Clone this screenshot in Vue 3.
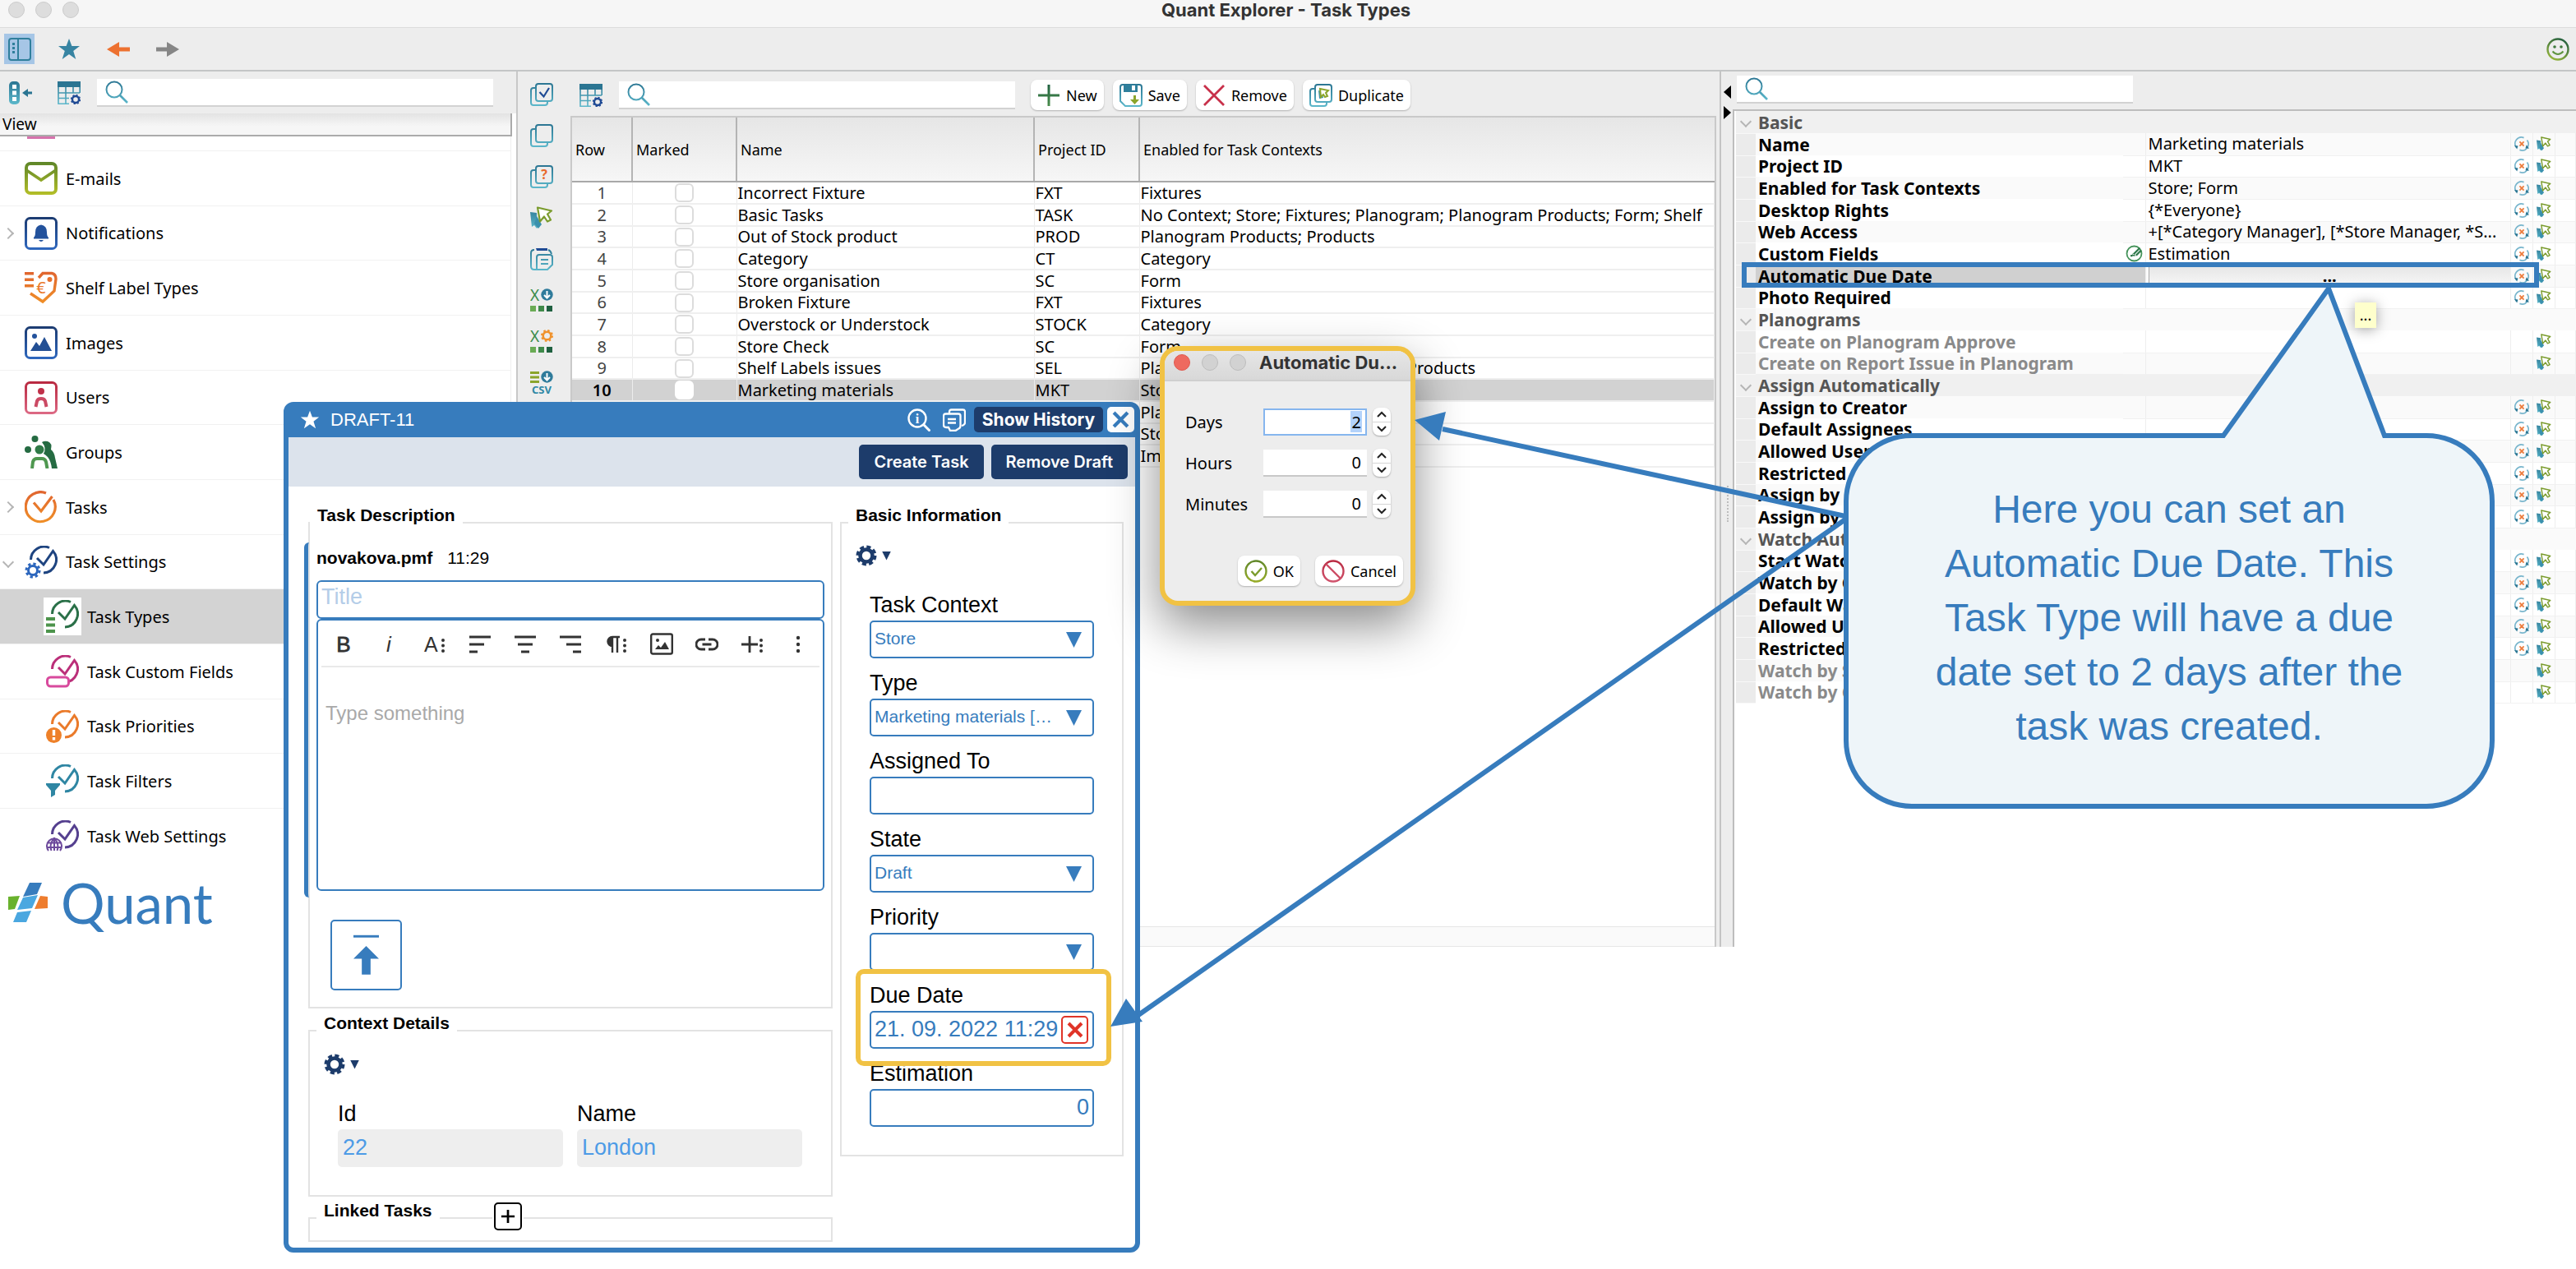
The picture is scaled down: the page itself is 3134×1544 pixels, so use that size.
<script setup>
import { ref } from 'vue'

//--------- Tree -------------
const views = [
  { name: 'E-mails', icon: 'mail' },
  { name: 'Notifications', icon: 'bell', arrow: 'right' },
  { name: 'Shelf Label Types', icon: 'label' },
  { name: 'Images', icon: 'image' },
  { name: 'Users', icon: 'user' },
  { name: 'Groups', icon: 'group' },
  { name: 'Tasks', icon: 'tasks', arrow: 'right' },
  { name: 'Task Settings', icon: 'tsettings', arrow: 'down' },
  { name: 'Task Types', icon: 'ttypes', child: true, active: true },
  { name: 'Task Custom Fields', icon: 'tfields', child: true },
  { name: 'Task Priorities', icon: 'tprio', child: true },
  { name: 'Task Filters', icon: 'tfilter', child: true },
  { name: 'Task Web Settings', icon: 'tweb', child: true }
]

const tools = ['markall', 'unmark', 'askmark', 'cursor', 'paste', 'xlsdown', 'xlsgear', 'csv']

const actions = [
  { name: 'New', icon: 'plus' },
  { name: 'Save', icon: 'save' },
  { name: 'Remove', icon: 'cross' },
  { name: 'Duplicate', icon: 'dup' }
]

//--------- Task types table -------------
const rows = [
  { name: 'Incorrect Fixture', id: 'FXT', ctx: 'Fixtures' },
  { name: 'Basic Tasks', id: 'TASK', ctx: 'No Context; Store; Fixtures; Planogram; Planogram Products; Form; Shelf' },
  { name: 'Out of Stock product', id: 'PROD', ctx: 'Planogram Products; Products' },
  { name: 'Category', id: 'CT', ctx: 'Category' },
  { name: 'Store organisation', id: 'SC', ctx: 'Form' },
  { name: 'Broken Fixture', id: 'FXT', ctx: 'Fixtures' },
  { name: 'Overstock or Understock', id: 'STOCK', ctx: 'Category' },
  { name: 'Store Check', id: 'SC', ctx: 'Form' },
  { name: 'Shelf Labels issues', id: 'SEL', ctx: 'Planogram Products; Shelf Labels; Products' },
  { name: 'Marketing materials', id: 'MKT', ctx: 'Store; Form' },
  { name: '', id: '', ctx: 'Planogram' },
  { name: '', id: '', ctx: 'Store' },
  { name: '', id: '', ctx: 'Images' }
]
const selectedRow = ref(9)

//--------- Properties -------------
const props = [
  { group: 'Basic' },
  { name: 'Name', value: 'Marketing materials' },
  { name: 'Project ID', value: 'MKT' },
  { name: 'Enabled for Task Contexts', value: 'Store; Form' },
  { name: 'Desktop Rights', value: '{*Everyone}' },
  { name: 'Web Access', value: '+[*Category Manager], [*Store Manager, *S...' },
  { name: 'Custom Fields', value: 'Estimation', edited: true },
  { name: 'Automatic Due Date', selected: true },
  { name: 'Photo Required', check: true },
  { group: 'Planograms' },
  { name: 'Create on Planogram Approve', off: true },
  { name: 'Create on Report Issue in Planogram', off: true },
  { group: 'Assign Automatically' },
  { name: 'Assign to Creator' },
  { name: 'Default Assignees' },
  { name: 'Allowed Users' },
  { name: 'Restricted' },
  { name: 'Assign by' },
  { name: 'Assign by' },
  { group: 'Watch Aut' },
  { name: 'Start Watc' },
  { name: 'Watch by C' },
  { name: 'Default Wa' },
  { name: 'Allowed U' },
  { name: 'Restricted' },
  { name: 'Watch by S', off: true },
  { name: 'Watch by C', off: true }
]

//--------- Due date dialog -------------
const due = ref([
  { name: 'Days', value: 2 },
  { name: 'Hours', value: 0 },
  { name: 'Minutes', value: 0 }
])
const step = (item, by) => {
  item.value = Math.max(0, Number(item.value) + by)
}

//--------- Draft window -------------
const fields = [
  { name: 'Task Context', type: 'select', value: 'Store' },
  { name: 'Type', type: 'select', value: 'Marketing materials […' },
  { name: 'Assigned To', type: 'text', value: '' },
  { name: 'State', type: 'select', value: 'Draft' },
  { name: 'Priority', type: 'select', value: '' },
  { name: 'Due Date', type: 'date', value: '21. 09. 2022 11:29' },
  { name: 'Estimation', type: 'number', value: '0' }
]
const editor = ['bold', 'italic', 'font', 'left', 'center', 'right', 'para', 'picture', 'link', 'more', 'dots']
</script>

<template>
  <svg class="sprite" aria-hidden="true">
    <defs>
      <linearGradient id="g-teal" gradientUnits="userSpaceOnUse" x1="0" y1="0" x2="0" y2="28"><stop offset="0" stop-color="#2b7592" /><stop offset="1" stop-color="#5cb8cb" /></linearGradient>
      <linearGradient id="g-lime" gradientUnits="userSpaceOnUse" x1="0" y1="0" x2="0" y2="40"><stop offset="0" stop-color="#5d8529" /><stop offset="1" stop-color="#b4bf28" /></linearGradient>
      <linearGradient id="g-navy" gradientUnits="userSpaceOnUse" x1="0" y1="0" x2="0" y2="40"><stop offset="0" stop-color="#1c3b70" /><stop offset="1" stop-color="#2f68bf" /></linearGradient>
      <linearGradient id="g-orange" gradientUnits="userSpaceOnUse" x1="0" y1="0" x2="0" y2="40"><stop offset="0" stop-color="#e0642f" /><stop offset="1" stop-color="#f09027" /></linearGradient>
      <linearGradient id="g-red" gradientUnits="userSpaceOnUse" x1="0" y1="0" x2="0" y2="40"><stop offset="0" stop-color="#b8283f" /><stop offset="1" stop-color="#dd6a85" /></linearGradient>
      <linearGradient id="g-green" gradientUnits="userSpaceOnUse" x1="0" y1="0" x2="0" y2="40"><stop offset="0" stop-color="#1f6040" /><stop offset="1" stop-color="#5fa352" /></linearGradient>
      <linearGradient id="g-smile" gradientUnits="userSpaceOnUse" x1="20" y1="0" x2="6" y2="28"><stop offset="0" stop-color="#1f5c3f" /><stop offset="1" stop-color="#9dbb3c" /></linearGradient>
    </defs>
  </svg>
  <svg class="symbols" aria-hidden="true">
    <!-- 28px toolbar icons -->
    <symbol id="i-panel" viewBox="0 0 28 28"><g fill="none" stroke="#2f7f9c" stroke-width="2"><rect x="1" y="1" width="26" height="26" rx="3" /><path d="M12 1v26" /></g><path fill="#2f7f9c" d="M5 6h3v3H5zM5 11h3v3H5zM5 16h3v3H5z" /></symbol>
    <symbol id="i-star" viewBox="0 0 28 28"><path fill="currentColor" d="M14 1l3.400 9H27l-7.800 5.900L22.300 26 14 20l-8.300 6 3.100-10.100L1 10h9.600z" /></symbol>
    <symbol id="i-back" viewBox="0 0 28 28"><path fill="currentColor" d="M0 14l15-9v6.500h13v5H15V23z" /></symbol>
    <symbol id="i-collapse" viewBox="0 0 28 28"><rect x="0" y="0" width="13" height="28" rx="5" fill="url(#g-teal)" /><path fill="#fff" d="M4 4h5v5H4zM4 11.500h5v5H4zM4 19h5v5H4z" /><path fill="#2b7592" d="M16 14l7-5v3.500h5v3h-5V19z" /></symbol>
    <symbol id="i-grid" viewBox="0 0 28 28"><path fill="#2b7592" d="M0 0h28v7H0z" /><path fill="none" stroke="url(#g-teal)" stroke-width="1.600" d="M1 7v20.200h13M10 7v20M19 7v7M27.200 7v7M1 14h26M1 20.500h13" /><circle cx="22" cy="22" r="4" fill="none" stroke="#1f4a94" stroke-width="2.400" /><circle cx="22" cy="22" r="5.500" fill="none" stroke="#1f4a94" stroke-width="1.400" stroke-dasharray="2.200 2.100" /></symbol>
    <symbol id="i-search" viewBox="0 0 28 28"><g fill="none" stroke="url(#g-teal)"><circle cx="11" cy="11" r="9.500" stroke-width="2" /><path stroke-width="2.600" d="M18 18l9 9" /></g></symbol>
    <symbol id="i-smile" viewBox="0 0 28 28"><circle cx="14" cy="14" r="12.500" fill="none" stroke="url(#g-smile)" stroke-width="2.400" /><circle cx="10" cy="11" r="1.800" fill="#3e7a3d" /><circle cx="18" cy="11" r="1.800" fill="#3e7a3d" /><path d="M7.500 16.500q6.500 7 13 0" fill="none" stroke="#5f9440" stroke-width="2" /></symbol>
    <symbol id="i-unmark" viewBox="0 0 28 28"><g fill="none" stroke="url(#g-teal)" stroke-width="2"><rect x="7" y="1" width="20" height="21" rx="3" /><path d="M7 6H4q-3 0-3 3v15q0 3 3 3h14q3 0 3-3v-2" /></g></symbol>
    <symbol id="i-markall" viewBox="0 0 28 28"><use href="#i-unmark" /><path d="M11.500 11l5 5.500L23 6" fill="none" stroke="#1f4a94" stroke-width="2.200" /></symbol>
    <symbol id="i-askmark" viewBox="0 0 28 28"><use href="#i-unmark" /><text x="17" y="17" text-anchor="middle" font-size="16" font-weight="700" fill="#e8692c">?</text></symbol>
    <symbol id="i-cursor" viewBox="0 0 28 28"><path fill="url(#g-teal)" d="M0 7l8 1v12l4 2-4 5-3-4-3 2z" /><path fill="#3a90ad" d="M8 12l6 10-4 5-5-6z" /><path fill="#fff" stroke="#7b9c2e" stroke-width="2.200" stroke-linejoin="round" d="M9 1.500l17 4-5 4 4 7-4 2-4-6-5 6z" /></symbol>
    <symbol id="i-paste" viewBox="0 0 28 28"><g fill="none" stroke="url(#g-teal)" stroke-width="2"><path d="M8 27H5q-4 0-4-4V7q0-4 4-4M22 3q3 1 4 5" /><path d="M8 27V12q0-3 3-3h13q3 0 3 3v9l-6 6z" /><path d="M13 15h9M13 20h9" /></g><path fill="#1f4a94" d="M7 1h14v3H8z" /></symbol>
    <symbol id="i-xls" viewBox="0 0 28 28"><text x="0" y="15" font-size="19" fill="#3b8c4a">X</text><path fill="#6aab55" d="M0 21h7v7H0z" /><path fill="#3f8a4a" d="M10 21h7v7h-7z" /><path fill="#1f6040" d="M20 21h7v7h-7z" /></symbol>
    <symbol id="i-down" viewBox="0 0 28 28"><circle cx="20.500" cy="7.500" r="7.200" fill="#2f7b9b" /><path d="M20.500 3v8M17 8l3.500 3.500L24 8" fill="none" stroke="#fff" stroke-width="2" /></symbol>
    <symbol id="i-xlsdown" viewBox="0 0 28 28"><use href="#i-xls" /><use href="#i-down" /></symbol>
    <symbol id="i-xlsgear" viewBox="0 0 28 28"><use href="#i-xls" /><circle cx="20.500" cy="7.500" r="4.800" fill="none" stroke="#f0922c" stroke-width="2.600" /><circle cx="20.500" cy="7.500" r="6.500" fill="none" stroke="#f0922c" stroke-width="2" stroke-dasharray="2.500 2.600" /></symbol>
    <symbol id="i-csv" viewBox="0 0 28 28"><path fill="#8ba52b" d="M0 1h11v3H0zM0 6.500h11v3H0zM0 12h11v3H0z" /><use href="#i-down" /><text x="14" y="28" text-anchor="middle" font-size="13" font-weight="700" fill="#3088a5">CSV</text></symbol>
    <symbol id="i-plus" viewBox="0 0 28 28"><path d="M14 1v26M1 14h26" stroke="url(#g-green)" stroke-width="3" /></symbol>
    <symbol id="i-save" viewBox="0 0 28 28"><path fill="#fff" stroke="url(#g-teal)" stroke-width="2" d="M4 1h20q3 0 3 3v20q0 3-3 3H7l-6-6V4q0-3 3-3z" /><path fill="#2f7f9c" d="M5 1h17v9H5z" /><path fill="#fff" d="M15 2h4v6h-4z" /><path fill="#8ba52b" d="M17 14h3v5h4l-5.500 6L13 19h4z" /></symbol>
    <symbol id="i-cross" viewBox="0 0 28 28"><path d="M2 2l24 24M26 2L2 26" stroke="#c8304a" stroke-width="2.800" /></symbol>
    <symbol id="i-dup" viewBox="0 0 28 28"><use href="#i-unmark" /><path fill="#3a90ad" d="M11 8l4 1 2 8-5 1z" /><path fill="#fff" stroke="#8ba52b" stroke-width="2" d="M13 6l10 2-3 3 2 4-3 1-2-3-3 3z" /></symbol>
    <symbol id="i-revert" viewBox="0 0 28 28"><path d="M18 2.500A12 12 0 0 0 4 21M10 25.500A12 12 0 0 0 24 7" fill="none" stroke="#79b6cd" stroke-width="2.600" /><path fill="#2b7592" d="M0 17l7 1-2 6zM28 23l-7-1 2-6z" /><path d="M10 10l8 8M18 10l-8 8" stroke="#ec7b3c" stroke-width="2.800" /></symbol>
    <symbol id="i-edited" viewBox="0 0 28 28"><circle cx="14" cy="14" r="12" fill="none" stroke="#45935a" stroke-width="2.400" /><path fill="none" stroke="#2f7a4b" stroke-width="3" d="M13 15L23 5M17 17l8-8" /><path fill="#2f7a4b" d="M11 13v5h5l-1-2-3 0zM8 16h3v3H8z" /></symbol>
    <symbol id="i-ok" viewBox="0 0 28 28"><circle cx="14" cy="14" r="12.500" fill="none" stroke="url(#g-lime)" stroke-width="2.400" /><path d="M8.500 14l4.500 5 8-9" fill="none" stroke="#7b9c2e" stroke-width="2.400" /></symbol>
    <symbol id="i-cancel" viewBox="0 0 28 28"><circle cx="14" cy="14" r="12.500" fill="none" stroke="url(#g-red)" stroke-width="2.400" /><path d="M5 5l18 18" stroke="#cc4a62" stroke-width="2.400" /></symbol>
    <!-- 40px tree icons -->
    <symbol id="i-mail" viewBox="0 0 40 40"><rect x="2" y="2" width="36" height="36" rx="5" fill="none" stroke="url(#g-lime)" stroke-width="4" /><path d="M2 10l18 12L38 10" fill="none" stroke="url(#g-lime)" stroke-width="3.600" /></symbol>
    <symbol id="i-bell" viewBox="0 0 40 40"><rect x="1.500" y="1.500" width="37" height="37" rx="5" fill="none" stroke="url(#g-navy)" stroke-width="3" /><path fill="#23529c" d="M20 9.500q7 1 7 9 0 5 2 6.500v1.500H11V25q2-1.500 2-6.500 0-8 7-9zM17 28h6q-3 4-6 0z" /></symbol>
    <symbol id="i-label" viewBox="0 0 40 40"><path fill="url(#g-orange)" d="M0 1h11v3.500H0zM0 8.500h11V12H0zM0 16h11v3.500H0z" /><path d="M17 8l5-5.500h11q5 1 5 7L36 24 22 37 7 27" fill="none" stroke="url(#g-orange)" stroke-width="3.400" /><circle cx="30.500" cy="10" r="3" fill="#e8702c" /><text x="20" y="27" text-anchor="middle" font-size="20" fill="#ea7a2a">€</text></symbol>
    <symbol id="i-image" viewBox="0 0 40 40"><rect x="1.500" y="1.500" width="37" height="37" rx="5" fill="none" stroke="url(#g-navy)" stroke-width="3" /><circle cx="12" cy="12" r="3" fill="#23529c" /><path fill="#234f94" d="M7 30l7-11 4 5 6-11 9 17z" /></symbol>
    <symbol id="i-user" viewBox="0 0 40 40"><rect x="1.500" y="1.500" width="37" height="37" rx="5" fill="none" stroke="url(#g-red)" stroke-width="3" /><circle cx="20" cy="12" r="4" fill="#c03049" /><path d="M13.500 31l1.500-7q1-3 5-3t5 3l1.500 7" fill="none" stroke="#cb4a64" stroke-width="4" /></symbol>
    <symbol id="i-group" viewBox="0 0 40 40"><circle cx="12.500" cy="4" r="4" fill="#256b42" /><circle cx="4" cy="17" r="4" fill="#256b42" /><path fill="#256b42" d="M21 8q3-2 7-1 6 2 4 10 4 3 5 10l3 13h-7q-1-9-5-14-3-3-5-4 4-7-2-14z" /><circle cx="18" cy="17" r="5.500" fill="#2f7a47" /><path d="M9 40l1-8q1-4 5-4h6q4 0 5 4l1.500 8" fill="none" stroke="#4f9850" stroke-width="4" /></symbol>
    <symbol id="i-tasks" viewBox="0 0 40 40"><path d="M26 3A18 18 0 1 0 35 11M11 14.500L20 25 33.500 7" fill="none" stroke="url(#g-orange)" stroke-width="3.200" /></symbol>
    <symbol id="i-ring" viewBox="0 0 40 40"><path d="M7.500 17A16 16 0 0 1 30 2.500M15 15l8 8L34.500 6.500A16 16 0 0 1 23 33" fill="none" stroke="currentColor" stroke-width="3" /></symbol>
    <symbol id="i-tsettings" viewBox="0 0 40 40"><use href="#i-ring" color="#1e4480" /><circle cx="10" cy="30" r="5.500" fill="none" stroke="#2c66bd" stroke-width="3" /><circle cx="10" cy="30" r="8" fill="none" stroke="#2c66bd" stroke-width="3" stroke-dasharray="3.300 3" /></symbol>
    <symbol id="i-ttypes" viewBox="0 0 40 40"><use href="#i-ring" color="#2a7048" /><path fill="#4d944c" d="M0 21h11v4H0zM0 28.500h11v4H0zM0 36h11v4H0z" /></symbol>
    <symbol id="i-tfields" viewBox="0 0 40 40"><use href="#i-ring" color="#bb2f79" /><rect x="1.500" y="27" width="26" height="11" rx="4" fill="#fff" stroke="#d84a9d" stroke-width="3" /></symbol>
    <symbol id="i-tprio" viewBox="0 0 40 40"><use href="#i-ring" color="#ea7a2a" /><circle cx="9.500" cy="30.500" r="9.500" fill="#ee8029" /><path fill="#fff" d="M7.800 24h3.400v7H7.800zM7.800 33h3.400v3.400H7.800z" /></symbol>
    <symbol id="i-tfilter" viewBox="0 0 40 40"><use href="#i-ring" color="#2f86a3" /><path fill="#2f86a3" d="M0 23h17v2l-6 7v5l-5 3v-8l-6-7z" /></symbol>
    <symbol id="i-tweb" viewBox="0 0 40 40"><use href="#i-ring" color="#55408f" /><path d="M3 37a9 9 0 1 1 14 0M10 21v16M1.500 27.500h17M1 33h18M6.500 37q-3-8 3.500-15 6.500 7 3.500 15" fill="none" stroke="#6d4a9c" stroke-width="2" /></symbol>
    <!-- draft window -->
    <symbol id="i-info" viewBox="0 0 28 28"><g fill="none" stroke="#fff"><circle cx="12" cy="12" r="10.500" stroke-width="2.400" /><path stroke-width="3" d="M19.500 19.500l8 8" /></g><text x="12" y="18" text-anchor="middle" font-size="16" font-weight="700" font-family="Liberation Serif" fill="#fff">i</text></symbol>
    <symbol id="i-docs" viewBox="0 0 28 28"><g fill="none" stroke="#fff" stroke-width="2.300"><path d="M8 6V4q0-2.500 2.500-2.500h14Q27 1.500 27 4v13q0 3-4 4" /><path d="M3.500 6.500H19q2.500 0 2.500 2.500v12q0 3-3 4l-3 2H9l-2-4H4q-3 0-3-3V9q0-2.500 2.500-2.500zM6 13h10M6 17.500h10" /></g></symbol>
    <symbol id="i-x" viewBox="0 0 20 20"><path d="M2 2l16 16M18 2L2 18" stroke="currentColor" stroke-width="4" /></symbol>
    <symbol id="i-gear" viewBox="0 0 26 26"><circle cx="13" cy="13" r="7.500" fill="none" stroke="#1d3c6b" stroke-width="4.600" /><circle cx="13" cy="13" r="10.500" fill="none" stroke="#1d3c6b" stroke-width="4" stroke-dasharray="5 3.247" /></symbol>
    <symbol id="i-upload" viewBox="0 0 32 52"><path d="M0 2h32" stroke="#377cbd" stroke-width="3" /><path fill="#377cbd" d="M16 14l16 16H21.500v20h-11V30H0z" /></symbol>
    <symbol id="i-bold" viewBox="0 0 28 28"><text x="14" y="23" text-anchor="middle" font-size="26" stroke="#333" stroke-width=".8">B</text></symbol>
    <symbol id="i-italic" viewBox="0 0 28 28"><text x="14" y="23" text-anchor="middle" font-size="26" font-style="italic">i</text></symbol>
    <symbol id="i-vdots" viewBox="0 0 28 28"><circle cx="24" cy="9" r="2" /><circle cx="24" cy="15.500" r="2" /><circle cx="24" cy="22" r="2" /></symbol>
    <symbol id="i-font" viewBox="0 0 28 28"><text x="1" y="23" font-size="25">A</text><use href="#i-vdots" /></symbol>
    <symbol id="i-left" viewBox="0 0 28 28"><path d="M1 5h26M1 14h18M1 23h10" stroke="#333" stroke-width="2.800" /></symbol>
    <symbol id="i-center" viewBox="0 0 28 28"><path d="M1 5h26M5 14h18M9 23h10" stroke="#333" stroke-width="2.800" /></symbol>
    <symbol id="i-right" viewBox="0 0 28 28"><path d="M1 5h26M9 14h18M17 23h10" stroke="#333" stroke-width="2.800" /></symbol>
    <symbol id="i-para" viewBox="0 0 28 28"><path d="M18 5H9a5.500 5.500 0 0 0 0 11M9 5v19M15 5v19" fill="none" stroke="#333" stroke-width="2.400" /><path d="M9 5a5.500 5.500 0 0 0 0 11z" /><use href="#i-vdots" /></symbol>
    <symbol id="i-picture" viewBox="0 0 28 28"><rect x="1.200" y="1.500" width="25.600" height="24" rx="2" fill="none" stroke="#333" stroke-width="2.400" /><circle cx="9" cy="9" r="2" /><path d="M6 20l4-5 3 3 5-7 5 9z" /></symbol>
    <symbol id="i-link" viewBox="0 0 28 28"><path d="M12 8H7a6 6 0 0 0 0 12h5M16 8h5a6 6 0 0 1 0 12h-5M8.500 14h11" fill="none" stroke="#333" stroke-width="2.800" /></symbol>
    <symbol id="i-more" viewBox="0 0 28 28"><path d="M10 4v20M0 14h20" stroke="#333" stroke-width="2.800" /><use href="#i-vdots" /></symbol>
    <symbol id="i-dots" viewBox="0 0 28 28"><circle cx="14" cy="6" r="2.200" /><circle cx="14" cy="14" r="2.200" /><circle cx="14" cy="22" r="2.200" /></symbol>
  </svg>

  <div class="page">
    <header class="titlebar">
      <span class="dot"></span><span class="dot"></span><span class="dot"></span>
      <h1>Quant Explorer - Task Types</h1>
    </header>
    <div class="toolbar">
      <button class="tool on" aria-label="Panel"><svg class="ico"><use href="#i-panel" /></svg></button>
      <button class="tool teal" aria-label="Favourites"><svg class="ico"><use href="#i-star" /></svg></button>
      <button class="tool orange" aria-label="Back"><svg class="ico"><use href="#i-back" /></svg></button>
      <button class="tool grey" aria-label="Forward"><svg class="ico flip"><use href="#i-back" /></svg></button>
      <button class="tool smile" aria-label="Feedback"><svg class="ico"><use href="#i-smile" /></svg></button>
    </div>

    <main class="main">
      <aside class="sidebar">
        <div class="side-head">
          <button class="tool" aria-label="Collapse"><svg class="ico"><use href="#i-collapse" /></svg></button>
          <button class="tool" aria-label="Columns"><svg class="ico"><use href="#i-grid" /></svg></button>
          <div class="search"><svg class="ico"><use href="#i-search" /></svg><input type="text" aria-label="Search views"></div>
        </div>
        <div class="side-view">View</div>
        <ul class="tree">
          <li class="peek"><span></span></li>
          <li v-for="item in views" :key="item.name" :class="{ child: item.child, active: item.active }">
            <a href="#">
              <span class="chev" :class="item.arrow"></span>
              <svg class="ico40"><use :href="'#i-' + item.icon" /></svg>
              <span>{{ item.name }}</span>
            </a>
          </li>
        </ul>
        <div class="logo">
          <svg viewBox="0 0 48 48" class="logo-mark">
            <path fill="#377cbd" d="M26 0h15l-6 14-17 3z" />
            <path fill="#69b22d" d="M0 17l14-1-6 16-8 1z" />
            <path fill="#4aa7e0" d="M18 18l18-3-7 16-18 2z" />
            <path fill="#ee7d2e" d="M39 16l9 1v14l-16 1z" />
            <path fill="#4aa7e0" d="M11 36l17-2-6 14H6z" />
          </svg>
          <span>Quant</span>
        </div>
      </aside>

      <div class="tools">
        <button v-for="t in tools" :key="t" class="tool" :aria-label="t"><svg class="ico"><use :href="'#i-' + t" /></svg></button>
      </div>

      <section class="center">
        <div class="center-head">
          <button class="tool" aria-label="Columns"><svg class="ico"><use href="#i-grid" /></svg></button>
          <div class="search"><svg class="ico"><use href="#i-search" /></svg><input type="text" aria-label="Search task types"></div>
          <button v-for="a in actions" :key="a.name" class="btn"><svg class="ico"><use :href="'#i-' + a.icon" /></svg>{{ a.name }}</button>
        </div>
        <div class="grid-box">
          <table class="grid">
            <thead>
              <tr>
                <th class="c-row">Row</th>
                <th class="c-mark">Marked</th>
                <th class="c-name">Name</th>
                <th class="c-id">Project ID</th>
                <th>Enabled for Task Contexts</th>
              </tr>
            </thead>
            <tbody>
              <tr v-for="(r, index) in rows" :key="index" :class="{ sel: index === selectedRow }" @click="selectedRow = index">
                <td class="num">{{ index + 1 }}</td>
                <td class="mark"><input type="checkbox" :aria-label="'Mark row ' + (index + 1)"></td>
                <td>{{ r.name }}</td>
                <td>{{ r.id }}</td>
                <td>{{ r.ctx }}</td>
              </tr>
            </tbody>
          </table>
          <div class="hscroll"></div>
        </div>
      </section>

      <div class="splitter"><span class="tri l"></span><span class="tri r"></span><span class="grip"></span></div>

      <section class="props">
        <div class="props-head">
          <div class="search"><svg class="ico"><use href="#i-search" /></svg><input type="text" aria-label="Search properties"></div>
        </div>
        <div class="props-box">
          <table>
            <colgroup><col class="p-gut"><col class="p-name"><col class="p-ico"><col><col class="p-act"><col class="p-act"><col class="p-end"></colgroup>
            <tbody>
              <tr v-for="(p, index) in props" :key="index" :class="{ group: p.group, off: p.off, sel: p.selected }">
                <td class="gut"><span v-if="p.group" class="chev down"></span></td>
                <th :colspan="p.group ? 6 : 1">{{ p.group || p.name }}</th>
                <template v-if="!p.group">
                  <td class="pico"><svg v-if="p.edited" class="ico20"><use href="#i-edited" /></svg></td>
                  <td class="val"><button v-if="p.selected">...</button><template v-else>{{ p.value }}</template></td>
                  <td class="pico"><svg v-if="!p.off" class="ico18"><use href="#i-revert" /></svg></td>
                  <td class="pico"><svg class="ico18"><use href="#i-cursor" /></svg></td>
                  <td></td>
                </template>
              </tr>
            </tbody>
          </table>
        </div>
      </section>
    </main>

    <!-- draft task window -->
    <section class="draft">
      <header class="draft-head">
        <svg class="ico star"><use href="#i-star" /></svg>
        <h2>DRAFT-11</h2>
        <svg class="ico"><use href="#i-info" /></svg>
        <svg class="ico docs"><use href="#i-docs" /></svg>
        <button class="history">Show History</button>
        <button class="close" aria-label="Close"><svg><use href="#i-x" /></svg></button>
      </header>
      <div class="draft-bar"><button>Create Task</button><button>Remove Draft</button></div>
      <div class="draft-body">
        <div class="col-left">
          <fieldset class="desc">
            <legend>Task Description</legend>
            <div class="message">
              <p><b>novakova.pmf</b><span>11:29</span></p>
              <input type="text" class="title" placeholder="Title" aria-label="Title">
              <div class="editor">
                <div class="editor-bar">
                  <button v-for="e in editor" :key="e" :aria-label="e"><svg class="ico"><use :href="'#i-' + e" /></svg></button>
                </div>
                <textarea placeholder="Type something" aria-label="Description"></textarea>
              </div>
            </div>
            <button class="upload" aria-label="Upload"><svg><use href="#i-upload" /></svg></button>
          </fieldset>
          <fieldset class="context">
            <legend>Context Details</legend>
            <button class="gear" aria-label="Context settings"><svg><use href="#i-gear" /></svg></button>
            <div class="pair">
              <div class="field"><label for="ctx-id">Id</label><input id="ctx-id" type="text" value="22" readonly></div>
              <div class="field"><label for="ctx-name">Name</label><input id="ctx-name" type="text" value="London" readonly></div>
            </div>
          </fieldset>
          <fieldset class="linked">
            <legend>Linked Tasks</legend>
            <button aria-label="Add linked task"><svg viewBox="0 0 20 20"><path d="M10 1v18M1 10h18" stroke="#000" stroke-width="3" /></svg></button>
          </fieldset>
        </div>
        <fieldset class="info">
          <legend>Basic Information</legend>
          <button class="gear" aria-label="Information settings"><svg><use href="#i-gear" /></svg></button>
          <div class="fields">
            <div v-for="(f, index) in fields" :key="f.name" class="field" :class="f.type">
              <label :for="'f' + index">{{ f.name }}</label>
              <select v-if="f.type === 'select'" :id="'f' + index"><option>{{ f.value }}</option></select>
              <input v-else :id="'f' + index" type="text" :value="f.value">
              <button v-if="f.type === 'date'" aria-label="Clear date"><svg><use href="#i-x" /></svg></button>
            </div>
          </div>
        </fieldset>
      </div>
    </section>

    <!-- due date dialog -->
    <section class="dialog">
      <header><span class="dot red"></span><span class="dot"></span><span class="dot"></span><h2>Automatic Du...</h2></header>
      <div class="dialog-body">
        <div v-for="d in due" :key="d.name" class="spin">
          <label :for="'due-' + d.name">{{ d.name }}</label>
          <input :id="'due-' + d.name" v-model="d.value" type="text" :class="{ focus: d.name === 'Days' }">
          <span class="steps">
            <button aria-label="Up" @click="step(d, 1)"><svg viewBox="0 0 12 8"><path d="M1 7l5-5 5 5" /></svg></button>
            <button aria-label="Down" @click="step(d, -1)"><svg viewBox="0 0 12 8"><path d="M1 1l5 5 5-5" /></svg></button>
          </span>
        </div>
        <div class="dialog-foot">
          <button class="btn"><svg class="ico"><use href="#i-ok" /></svg>OK</button>
          <button class="btn"><svg class="ico"><use href="#i-cancel" /></svg>Cancel</button>
        </div>
      </div>
    </section>

    <!-- annotations -->
    <div class="mark-row"></div>
    <div class="mark-due"></div>
    <div class="tip">...</div>
    <svg class="arrows" viewBox="0 0 900 760">
      <g stroke="#377cbd" stroke-width="6"><path d="M405 22L895 128M35 735L895 132" /></g>
      <path fill="#377cbd" d="M371 11l38-10-8 35zM1 749l19-34 20 28z" />
    </svg>
    <svg class="bubble" viewBox="0 0 798 640">
      <path d="M83 183H462L590 4 658 183H709A80 80 0 0 1 789 263V554A80 80 0 0 1 709 634H83A80 80 0 0 1 3 554V263A80 80 0 0 1 83 183Z" fill="#eef5f9" stroke="#377cbd" stroke-width="6" />
    </svg>
    <p class="bubble-text">Here you can set an<br>Automatic Due Date. This<br>Task Type will have a due<br>date set to 2 days after the<br>task was created.</p>
  </div>
</template>

<style>
body {
  margin: 0;
  background: #fff;
}
</style>

<style scoped>
* {
  box-sizing: border-box;
}
.sprite {
  position: absolute;
  width: 0;
  height: 0;
}
.symbols {
  display: none;
}
.page {
  position: relative;
  min-height: 1544px;
  overflow: hidden;
  font-family: "Noto Sans", sans-serif;
  font-size: 20px;
  color: #000;
}
button, input, select, textarea {
  font: inherit;
  color: inherit;
  margin: 0;
  padding: 0;
  border: none;
  outline: none;
  background: none;
}
h1, h2, p, ul {
  margin: 0;
  padding: 0;
}
.ico {
  display: block;
  flex: none;
  width: 28px;
  height: 28px;
}
.ico40 {
  display: block;
  flex: none;
  width: 40px;
  height: 40px;
}
.ico20 {
  display: block;
  margin: 0 auto;
  width: 21px;
  height: 21px;
}
.ico18 {
  display: block;
  margin: 0 auto;
  width: 18px;
  height: 18px;
}

/* window bars */
.titlebar {
  display: flex;
  align-items: center;
  gap: 13px;
  height: 34px;
  padding: 0 10px 10px;
  background: #f6f6f6;
  border-bottom: 1px solid #dcdcdc;
}
.titlebar h1 {
  flex: 1;
  padding-right: 104px;
  text-align: center;
  font: 700 22px/24px Inter, sans-serif;
  color: #333;
}
.dot {
  width: 20px;
  height: 20px;
  border-radius: 50%;
  background: #dddddd;
  border: 1px solid #cbcbcb;
}
.toolbar {
  display: flex;
  align-items: center;
  gap: 23px;
  height: 53px;
  padding: 0 4px 0 5px;
  background: #ededed;
  border-bottom: 2px solid #c3c5c6;
}
.tool {
  display: flex;
  align-items: center;
  justify-content: center;
  flex: none;
  width: 37px;
  height: 37px;
}
.tool.on {
  background: #a6c6e6;
}
.teal {
  color: #3784a2;
}
.orange {
  color: #ed7130;
}
.grey {
  color: #868686;
}
.flip {
  transform: scaleX(-1);
}
.smile {
  margin-left: auto;
}

.main {
  display: flex;
  min-height: 1065px;
}
.search {
  display: flex;
  align-items: center;
  gap: 8px;
  width: 482px;
  height: 34px;
  padding: 0 10px;
  background: #fff;
  border-bottom: 2px solid #d2d2d2;
}
.search input {
  flex: 1;
  min-width: 0;
}
.btn {
  display: flex;
  align-items: center;
  gap: 7px;
  height: 37px;
  padding: 0 8px;
  font-size: 18px;
  background: #fff;
  border-radius: 8px;
  box-shadow: 0 1px 2px rgba(0, 0, 0, .25);
}

/* tree */
.sidebar {
  flex: none;
  width: 630px;
  border-right: 2px solid #c8c8c8;
}
.side-head {
  display: flex;
  align-items: center;
  gap: 22px;
  height: 51px;
  padding-left: 6px;
  background: #ededed;
}
.side-head .search {
  margin-left: -6px;
}
.side-view {
  width: 623px;
  height: 28px;
  padding-left: 3px;
  font-size: 19px;
  line-height: 26px;
  background: linear-gradient(#e3e3e3, #f6f6f6 60%);
  border-right: 2px solid #ababab;
  border-bottom: 2px solid #ababab;
}
.tree {
  width: 622px;
  list-style: none;
  border-right: 1px solid #efefef;
}
.tree li {
  height: 67px;
  border-bottom: 1px solid #f1f1f1;
}
.tree li:nth-child(3n) {
  height: 66px;
}
.tree .peek {
  height: 18px;
}
.tree li:last-child {
  border-bottom: none;
}
.peek span {
  display: block;
  width: 34px;
  height: 3px;
  margin-left: 33px;
  background: #d673ad;
}
.tree a {
  display: flex;
  align-items: center;
  height: 100%;
  gap: 10px;
  color: #000;
  text-decoration: none;
}
.tree .chev {
  width: 20px;
}
.tree .child .chev {
  width: 46px;
}
.tree .active {
  background: #d3d3d3;
}
.tree .active .ico40 {
  background: #fff;
  box-shadow: 0 0 0 3px #fff;
}
.chev {
  display: flex;
  justify-content: center;
}
.chev.right::before, .chev.down::before {
  content: "";
  width: 8px;
  height: 8px;
  border-right: 2px solid #b5b5b5;
  border-bottom: 2px solid #b5b5b5;
  transform: rotate(-45deg);
}
.chev.down::before {
  transform: rotate(45deg);
}
.logo {
  display: flex;
  align-items: center;
  gap: 16px;
  padding: 7px 0 0 10px;
  font: 400 67px/80px Lato, sans-serif;
  color: #377cbd;
}
.logo-mark {
  width: 48px;
  height: 48px;
}

/* icon column */
.tools {
  flex: none;
  display: flex;
  flex-direction: column;
  align-items: center;
  gap: 13px;
  width: 64px;
  padding: 9px 6px 0 0;
  background: #ededed;
}

/* grid */
.center {
  flex: 1;
  min-width: 0;
  display: flex;
  flex-direction: column;
  background: #ededed;
  padding-right: 4px;
}
.center-head {
  display: flex;
  align-items: center;
  gap: 11px;
  height: 54px;
  padding: 3px 0 0 6px;
}
.center-head .search {
  margin: 0 8px 0 5px;
}
.grid-box {
  flex: 1;
  display: flex;
  flex-direction: column;
  background: #fff;
  border: 2px solid #c9c9c9;
  border-bottom: none;
}
.grid {
  width: 100%;
  table-layout: fixed;
  border-collapse: collapse;
}
.grid th {
  height: 78px;
  padding: 0 4px;
  text-align: left;
  font-weight: 400;
  font-size: 18px;
  background: linear-gradient(#e6e6e6, #f6f6f6);
  border-right: 2px solid #b4b4b4;
  border-bottom: 2px solid #a9a9a9;
}
.grid th:last-child {
  border-right: none;
}
.c-row {
  width: 73px;
}
.c-mark {
  width: 127px;
}
.c-name {
  width: 362px;
}
.c-id {
  width: 128px;
}
.grid td {
  height: 27px;
  padding: 0 1px;
  line-height: 24px;
  white-space: nowrap;
  overflow: hidden;
  border-right: 1px solid #ececec;
  border-bottom: 2px solid #efefef;
}
.grid tr:nth-child(3n) td {
  height: 26px;
}
.grid .sel td {
  background: #d2d2d2;
}
.grid .num {
  text-align: center;
  color: #444;
}
.grid .sel .num {
  font-weight: 600;
  color: #000;
}
.mark input {
  appearance: none;
  display: block;
  width: 23px;
  height: 23px;
  margin: 0 auto;
  background: #fff;
  border: 2px solid #dcdcdc;
  border-radius: 6px;
}
.sel .mark input {
  border-color: #fff;
}
.hscroll {
  height: 25px;
  margin-top: auto;
  background: #fafafa;
  border-top: 1px solid #e6e6e6;
  border-bottom: 1px solid #e6e6e6;
}

.splitter {
  flex: none;
  width: 16px;
  padding-top: 17px;
  background: #ededed;
  border-left: 2px solid #c4c4c4;
}
.tri {
  display: block;
  width: 9px;
  height: 16px;
  margin: 0 0 9px 3px;
  background: #000;
}
.tri.l {
  clip-path: polygon(0 50%, 100% 0, 100% 100%);
}
.tri.r {
  clip-path: polygon(100% 50%, 0 0, 0 100%);
}
.grip {
  display: block;
  height: 44px;
  margin: 446px 0 0 7px;
  border-left: 2px dotted #bdbdbd;
}

/* properties */
.props {
  flex: none;
  width: 1026px;
  display: flex;
  flex-direction: column;
  background: #ededed;
}
.props-head {
  height: 46px;
  padding: 5px 0 0 5px;
}
.props-box {
  flex: 1;
  padding-left: 2px;
  background: #fff;
  border-top: 2px solid #bdbdbd;
  border-left: 2px solid #bdbdbd;
}
.props table {
  width: 100%;
  table-layout: fixed;
  border-collapse: collapse;
}
.p-gut {
  width: 24px;
}
.p-name {
  width: 447px;
}
.p-ico, .p-act {
  width: 27px;
}
.p-end {
  width: 25px;
}
.props tr {
  height: 27px;
}
.props tr:nth-child(3n) {
  height: 26px;
}
.props tr:nth-child(even) {
  background: #fafafa;
}
.props th {
  padding: 0 3px;
  text-align: left;
  font-weight: 700;
  font-size: 21px;
  line-height: 24px;
  white-space: nowrap;
}
.props td {
  padding: 0;
  line-height: 24px;
  border-right: 1px solid #eeeeee;
  border-bottom: 1px solid #f1f1f1;
}
.props .gut {
  background: #ebebeb;
  border-right: none;
  border-bottom: 1px solid #f8f8f8;
}
.props .val {
  padding-left: 3px;
  white-space: nowrap;
  overflow: hidden;
}
.props .group, .props .group .gut {
  background: #f0f0f0;
}
.props .group th {
  color: #555;
}
.props .off th {
  color: #8a8a8a;
}
.props .sel th, .props .sel .pico:nth-child(3) {
  background: #d0d0d0;
}
.val button {
  display: block;
  width: 100%;
  height: 24px;
  line-height: 16px;
  font-weight: 700;
  background: linear-gradient(#e6e6e6, #f7f7f7);
  border-left: 1px solid #aaa;
}

/* draft window */
.draft {
  position: absolute;
  left: 345px;
  top: 489px;
  width: 1042px;
  border: 6px solid #377cbd;
  border-radius: 12px;
  background: #fff;
  font-family: "Liberation Sans", Arial, sans-serif;
  font-size: 21px;
}
.draft-head {
  display: flex;
  align-items: flex-start;
  height: 37px;
  padding-right: 1px;
  background: #377cbd;
  color: #fff;
}
.draft-head h2 {
  flex: 1;
  font-size: 22px;
  line-height: 31px;
  font-weight: 400;
}
.draft-head .ico {
  margin: 2px 15px 0 0;
}
.draft-head .docs {
  margin-right: 10px;
}
.draft-head .star {
  width: 24px;
  margin: 2px 13px 0 14px;
}
.history {
  width: 157px;
  height: 31px;
  margin-right: 5px;
  border-radius: 5px;
  background: #1d3c6b;
  font: 700 21px/31px Inter, sans-serif;
}
.close {
  width: 33px;
  height: 31px;
  border-radius: 5px;
  background: #fff;
  color: #377cbd;
}
.close svg {
  display: block;
  width: 21px;
  height: 21px;
  margin: 0 auto;
}
.draft-bar {
  display: flex;
  justify-content: flex-end;
  gap: 9px;
  height: 60px;
  padding: 9px;
  background: #dce3ec;
}
.draft-bar button {
  height: 42px;
  padding: 0 18px;
  border-radius: 5px;
  background: #1d3c6b;
  color: #fff;
  font: 600 20px/42px Inter, sans-serif;
}
.draft-body {
  display: flex;
  align-items: flex-start;
  gap: 9px;
  padding: 23px 14px 7px 24px;
}
.col-left {
  flex: 1;
  min-width: 0;
}
fieldset {
  position: relative;
  min-width: 0;
  margin: 0;
  padding: 6px 8px;
  border: 2px solid #e3e3e3;
}
legend {
  padding: 0 9px 18px;
  font-weight: 700;
  line-height: 24px;
}
.desc {
  padding: 3px 8px 20px 0;
}
.message {
  margin-left: -7px;
  padding: 7px 0 8px 10px;
  border-left: 5px solid #377cbd;
  border-radius: 6px 0 0 6px;
}
.message p {
  display: flex;
  gap: 18px;
  height: 39px;
  line-height: 24px;
}
.title {
  display: block;
  width: 100%;
  height: 47px;
  padding: 0 4px 6px;
  font-size: 27px;
  border: 2px solid #377cbd;
  border-radius: 6px;
}
.title::placeholder {
  color: #b4cde8;
}
.editor {
  height: 331px;
  padding: 0 4px;
  border: 2px solid #377cbd;
  border-radius: 6px;
}
.editor-bar {
  display: flex;
  justify-content: space-between;
  align-items: center;
  height: 57px;
  padding: 2px 12px 0 13px;
  border-bottom: 2px solid #e9e9e9;
}
.editor-bar svg {
  fill: #333;
}
.editor textarea {
  display: block;
  width: 100%;
  height: 260px;
  padding: 42px 5px 0;
  font-size: 24px;
  line-height: 28px;
  resize: none;
}
.editor textarea::placeholder {
  color: #a9a9a9;
}
.upload {
  display: flex;
  align-items: center;
  justify-content: center;
  width: 87px;
  height: 86px;
  margin: 27px 0 0 25px;
  border: 2px solid #377cbd;
  border-radius: 5px;
}
.upload svg {
  width: 31px;
  height: 51px;
}
.context {
  margin-top: 6px;
  padding-top: 7px;
  padding-bottom: 34px;
}
.gear {
  display: flex;
  align-items: center;
  gap: 6px;
  height: 26px;
  margin: 0 0 28px 9px;
}
.gear svg {
  width: 26px;
  height: 26px;
}
.gear::after {
  content: "";
  width: 11px;
  height: 11px;
  background: #1d3c6b;
  clip-path: polygon(0 0, 100% 0, 50% 100%);
}
.pair {
  display: flex;
  gap: 17px;
  padding: 0 27px 0 26px;
}
.pair .field {
  flex: 1;
}
.field {
  position: relative;
  font-size: 27px;
}
.field label {
  display: block;
  line-height: 38px;
}
.field input, .field select {
  display: block;
  width: 100%;
  height: 46px;
  padding: 0 4px 2px;
  color: #377cbd;
  border: 2px solid #377cbd;
  border-radius: 5px;
}
.pair input {
  color: #4d9be6;
  background: #eee;
  border-color: #eee;
}
.field select {
  appearance: none;
  padding-bottom: 4px;
  font-size: 21px;
}
.field.select::after {
  content: "";
  position: absolute;
  right: 15px;
  bottom: 13px;
  width: 19px;
  height: 19px;
  background: #377cbd;
  clip-path: polygon(0 0, 100% 0, 50% 100%);
  pointer-events: none;
}
.field.number input {
  text-align: right;
}
.date button {
  position: absolute;
  right: 7px;
  bottom: 6px;
  width: 33px;
  height: 34px;
  color: #e03428;
  background: #fff;
  border: 2px solid #e03428;
  border-radius: 5px;
}
.date svg {
  display: block;
  width: 20px;
  height: 20px;
  margin: 0 auto;
}
.linked {
  margin-top: 5px;
  padding: 0 8px 6px;
}
.linked button {
  position: absolute;
  left: 224px;
  top: -40px;
  width: 34px;
  height: 34px;
  background: #fff;
  border: 2px solid #000;
  border-radius: 5px;
  box-shadow: 0 0 0 2px #fff;
}
.linked svg {
  display: block;
  width: 18px;
  height: 18px;
  margin: 0 auto;
}
.info {
  flex: none;
  width: 345px;
  padding-bottom: 34px;
}
.fields {
  display: flex;
  flex-direction: column;
  gap: 11px;
  padding: 0 26px;
}

/* dialog */
.dialog {
  position: absolute;
  left: 1411px;
  top: 421px;
  width: 311px;
  border: 6px solid #f1c244;
  border-radius: 22px;
  background: #ededed;
  box-shadow: 0 24px 60px rgba(0, 0, 0, .45);
}
.dialog header {
  display: flex;
  align-items: center;
  gap: 14px;
  height: 37px;
  padding: 0 10px 8px 11px;
  border-bottom: 2px solid #cfcfcf;
  border-radius: 16px 16px 0 0;
  background: linear-gradient(#e6e6e6, #d8d8d8);
}
.dialog .dot {
  flex: none;
  background: #d2d2d2;
  border-color: #bdbdbd;
}
.dialog .dot.red {
  background: #ee6a5f;
  border-color: #e0594e;
}
.dialog h2 {
  padding-left: 2px;
  font: 700 22px/24px Inter, sans-serif;
  white-space: nowrap;
  color: #333;
}
.dialog-body {
  padding: 32px 9px 18px;
}
.spin {
  display: flex;
  align-items: center;
  height: 34px;
  margin: 0 15px 16px 16px;
}
.spin label {
  flex: 1;
}
.spin input {
  width: 126px;
  height: 33px;
  padding-right: 7px;
  text-align: right;
  background: #fff;
  border-bottom: 2px solid #c8c8c8;
}
.spin .focus {
  border: 2px solid #86b6ee;
  padding-right: 5px;
  background: linear-gradient(#b3d2fa, #b3d2fa) right 4px center / 14px 26px no-repeat #fff;
}
.steps {
  display: flex;
  flex-direction: column;
  width: 22px;
  height: 34px;
  margin-left: 7px;
  background: #fff;
  border-radius: 8px;
  box-shadow: 0 1px 2px rgba(0, 0, 0, .3);
}
.steps button {
  flex: 1;
  display: flex;
  align-items: center;
  justify-content: center;
}
.steps button + button {
  border-top: 1px solid #d5d5d5;
}
.steps svg {
  width: 12px;
  height: 8px;
  fill: none;
  stroke: #222;
  stroke-width: 2;
}
.dialog-foot {
  display: flex;
  justify-content: flex-end;
  gap: 18px;
  margin-top: 46px;
}

/* annotations */
.mark-row {
  position: absolute;
  left: 2119px;
  top: 319px;
  width: 970px;
  height: 31px;
  border: 6px solid #377cbd;
}
.mark-due {
  position: absolute;
  left: 1041px;
  top: 1179px;
  width: 311px;
  height: 118px;
  border: 6px solid #f1c244;
  border-radius: 10px;
}
.tip {
  position: absolute;
  left: 2865px;
  top: 368px;
  width: 26px;
  height: 31px;
  text-align: center;
  font-size: 18px;
  line-height: 31px;
  background: #feffcc;
  box-shadow: 0 2px 16px rgba(0, 0, 0, .35);
}
.arrows {
  position: absolute;
  left: 1350px;
  top: 500px;
  width: 900px;
  height: 760px;
}
.bubble {
  position: absolute;
  left: 2243px;
  top: 347px;
  width: 798px;
  height: 640px;
}
.bubble-text {
  position: absolute;
  left: 2243px;
  top: 587px;
  width: 792px;
  text-align: center;
  font: 400 48px/66px "Liberation Sans", Arial, sans-serif;
  color: #377cbd;
}
</style>
